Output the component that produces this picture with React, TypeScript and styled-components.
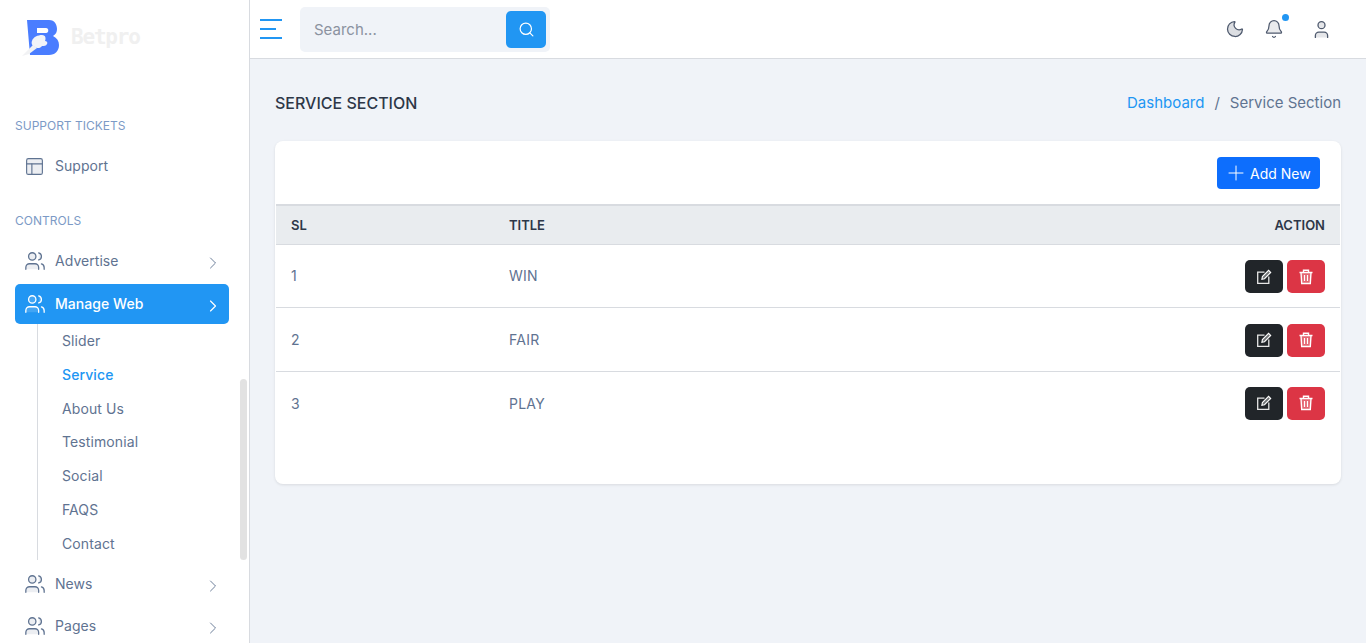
import React from "react";
import styled, { createGlobalStyle } from "styled-components";
import { ChevronRight, Search, Moon, Bell, User, Users, Layout, Plus } from "lucide-react";

const Global = createGlobalStyle`
  html, body { margin: 0; padding: 0; height: 100%; overflow: hidden; }
  body { font-family: Inter, "Liberation Sans", sans-serif; background: #f0f3f8; }
  * { box-sizing: border-box; }
`;

const Page = styled.div`display: flex; width: 1366px; height: 643px; overflow: hidden;`;

const Sidebar = styled.aside`
  position: relative; width: 250px; height: 643px; flex: none; background: #fff;
  border-right: 1px solid #d8dbe0; overflow: hidden;
`;
const Brand = styled.div`display: flex; align-items: flex-start; height: 58px; padding: 18px 0 0 22px; gap: 9px; margin-bottom: 58px;`;
const BrandName = styled.span`font: 700 21px/1 "DejaVu Sans Mono", monospace; color: #f0f0f0; letter-spacing: -1.2px; margin-top: 9px;`;
const SectionLabel = styled.div<{ $top: number }>`
  font-size: 12px; line-height: 20px; height: 20px; margin: ${p => p.$top}px 0 0 15px; color: #7c9ac6;
`;
const NavRow = styled.div<{ $active?: boolean; $mt?: number }>`
  display: flex; align-items: center; width: 214px; height: 40px; margin: ${p => p.$mt ?? 0}px 0 0 15px; padding: 0 6px 0 9px;
  border-radius: 5px; font-size: 14px; font-weight: ${p => (p.$active ? 500 : 400)};
  background: ${p => (p.$active ? "#2196f3" : "transparent")};
  color: ${p => (p.$active ? "#fff" : "#5f7391")};
  svg { flex: none; }
`;
const NavText = styled.span`margin-left: 9px; flex: 1; padding-bottom: 2px; letter-spacing: 0.05px;`;
const Chevron = styled(ChevronRight)`margin-top: 4px;`;
const SupportIcon = styled(Layout)`margin-left: 0;`;
const SupportText = styled(NavText)`margin-left: 10px;`;
const SubList = styled.div`margin: 0 0 0 37px; height: 236px; border-left: 1px solid #d8dbe0; display: flex; flex-direction: column;`;
const SubItem = styled.div<{ $active?: boolean }>`
  height: 33.8px; line-height: 33.8px; padding-left: 24px; font-size: 14px; flex: none; letter-spacing: 0.1px;
  font-weight: ${p => (p.$active ? 500 : 400)};
  color: ${p => (p.$active ? "#2196f3" : "#5f7391")};
`;
const ScrollThumb = styled.div`position: absolute; left: 240px; top: 379px; width: 7px; height: 181px; background: #e2e2e2; border-radius: 4px;`;

const Content = styled.div`flex: 1; min-width: 0; display: flex; flex-direction: column;`;
const Topbar = styled.header`
  height: 59px; flex: none; background: #fff; border-bottom: 1px solid #d8dbe0;
  display: flex; align-items: center; padding: 0 0 0 10px;
`;
const Burger = styled.div`display: flex; flex-direction: column; gap: 7px; width: 22px; margin-top: -1px;`;
const BurgerLine = styled.span<{ $w: number }>`display: block; height: 2px; width: ${p => p.$w}px; background: #2196f3;`;
const SearchBox = styled.div`
  display: flex; align-items: center; width: 250px; height: 45px; margin: 1px 0 0 18px; background: #f0f3f8; border-radius: 5px;
  padding: 0 4px 0 14px;
`;
const SearchText = styled.span`flex: 1; font-size: 15px; color: #8b92a0;`;
const SearchBtn = styled.div`
  width: 40px; height: 37px; background: #2196f3; border-radius: 5px; display: flex; align-items: center; justify-content: center; color: #fff;
`;
const TopIcons = styled.div`margin-left: auto; display: flex; align-items: center; height: 100%; padding-right: 34px;`;
const TopIcon = styled.div<{ $ml: number }>`position: relative; margin-left: ${p => p.$ml}px; color: #4f5a6e; display: flex;`;
const Dot = styled.span`position: absolute; top: -5px; right: -5px; width: 7px; height: 7px; border-radius: 50%; background: #2196f3;`;

const Main = styled.main`flex: 1; padding: 0 25px;`;
const Crumbs = styled.div`display: flex; align-items: center; justify-content: space-between; height: 82px; padding-top: 6px;`;
const Title = styled.h1`margin: 0; font-size: 16px; font-weight: 500; color: #2d3748;`;
const Trail = styled.div`display: flex; gap: 10px; font-size: 15px; color: #5f7391; margin-top: -2px;`;
const TrailLink = styled.span`color: #2196f3;`;

const Card = styled.section`
  background: #fff; border-radius: 8px; height: 343px; box-shadow: 0 1px 3px rgba(0,0,0,.1); overflow: hidden; padding: 0 1px;
`;
const CardHead = styled.div`display: flex; justify-content: flex-end; align-items: center; height: 64px; padding: 0 20px 0 0; margin-bottom: -1px;`;
const AddBtn = styled.div`
  display: flex; align-items: center; width: 103px; height: 32px; border-radius: 4px; background: #0d6efd; color: #fff; font-size: 14px; padding-left: 7px; gap: 2px;
`;
const Table = styled.table`width: 100%; border-collapse: collapse; table-layout: fixed;`;
const Th = styled.th<{ $right?: boolean; $w?: number }>`
  height: 39px; background: #e9ecef; border-top: 2px solid #d8dbe0; border-bottom: 1px solid #d8dbe0; font-size: 13px; font-weight: 600; color: #2d3748;
  padding: 0 15px; text-align: ${p => (p.$right ? "right" : "left")}; ${p => (p.$w ? `width: ${p.$w}px;` : "")}
`;
const Actions = styled.div`display: flex; justify-content: flex-end; gap: 4px; padding-top: 2px;`;
const Td = styled.td<{ $right?: boolean }>`
  height: 63.5px; border-bottom: 1px solid #d8dbe0; font-size: 14px; letter-spacing: 0.25px; color: #5f7391; padding: 0 15px; text-align: ${p => (p.$right ? "right" : "left")};
`;
const ActionBtn = styled.div<{ $bg: string }>`
  width: 38px; height: 33px; border-radius: 5px; background: ${p => p.$bg}; color: #fff; display: flex; align-items: center; justify-content: center;
`;
const LastRowTd = styled(Td)`border-bottom: none; ${Actions} { padding-top: 0; }`;

const Logo = () => (
  <svg width="40" height="40" viewBox="0 0 40 40">
    <path d="M5 2H27C33 2 35 7 35 11C35 14 34 16 31 18C35 20 37 23 37 27C37 33 33 37 27 37H8Z" fill="#4a7dff" />
    <path d="M15 10h9c3 0 3 5 0 5h-9z" fill="#fff" />
    <path d="M10 23c1-4 6-6 10-6 4 0 4 4 3 6 2 0 3 2 2 3-1 2-3 2-5 2-1 2-5 3-7 1-3-1-4-4-3-6z" fill="#f2f4f8" />
    <path d="M0 38L11 27l4 3-8 6z" fill="#f1f2f4" />
  </svg>
);

const EditIcon = () => (
  <svg width="16" height="16" viewBox="0 0 16 16" fill="none" stroke="#e6e6e6" strokeWidth="1.3">
    <path d="M8.5 3.2H1.7V14.3H12.8V7.5" />
    <path d="M5.9 10.2L6.4 7.6L12.6 1.4L14.7 3.5L8.5 9.7Z" fill="rgba(255,255,255,.35)" stroke="#fff" strokeWidth="1.1" />
  </svg>
);

const TrashIcon = () => (
  <svg width="16" height="16" viewBox="0 0 16 16" fill="none" stroke="currentColor" strokeWidth="1.4">
    <path d="M1.5 3.5H14.5" />
    <path d="M5.5 3.5V1.3H10.5V3.5" />
    <path d="M3 3.5L3.7 14.5H12.3L13 3.5" fill="rgba(255,255,255,.25)" />
    <path d="M6.5 6V12M9.5 6V12" strokeWidth="1.2" />
  </svg>
);

const iconFill = "rgba(95,115,145,.12)";

const NavIcon = ({ active }: { active?: boolean }) => (
  <Users size={22} strokeWidth={1.4} fill={active ? "rgba(255,255,255,.15)" : iconFill} />
);

const Row = ({ sl, title, last }: { sl: number; title: string; last?: boolean }) => {
  const Cell = last ? LastRowTd : Td;
  return (
    <tr>
      <Cell>{sl}</Cell>
      <Cell>{title}</Cell>
      <Cell $right>
        <Actions>
          <ActionBtn $bg="#212529"><EditIcon /></ActionBtn>
          <ActionBtn $bg="#dc3545"><TrashIcon /></ActionBtn>
        </Actions>
      </Cell>
    </tr>
  );
};

const subs = ["Slider", "Service", "About Us", "Testimonial", "Social", "FAQS", "Contact"];

export default function App() {
  return (
    <Page>
      <Global />
      <Sidebar>
        <Brand><Logo /><BrandName>Betpro</BrandName></Brand>
        <SectionLabel $top={0}>SUPPORT TICKETS</SectionLabel>
        <NavRow $mt={10}>
          <SupportIcon size={21} strokeWidth={1.3} fill={iconFill} />
          <SupportText>Support</SupportText>
        </NavRow>
        <SectionLabel $top={25}>CONTROLS</SectionLabel>
        <NavRow $mt={10}>
          <NavIcon /><NavText>Advertise</NavText><Chevron size={20} strokeWidth={1.1} />
        </NavRow>
        <NavRow $active $mt={3}>
          <NavIcon active /><NavText>Manage Web</NavText><Chevron size={20} strokeWidth={1.4} />
        </NavRow>
        <SubList>
          {subs.map(s => <SubItem key={s} $active={s === "Service"}>{s}</SubItem>)}
        </SubList>
        <NavRow $mt={4}>
          <NavIcon /><NavText>News</NavText><Chevron size={20} strokeWidth={1.1} />
        </NavRow>
        <NavRow $mt={2}>
          <NavIcon /><NavText>Pages</NavText><Chevron size={20} strokeWidth={1.1} />
        </NavRow>
        <ScrollThumb />
      </Sidebar>
      <Content>
        <Topbar>
          <Burger>
            <BurgerLine $w={22} /><BurgerLine $w={16} /><BurgerLine $w={22} />
          </Burger>
          <SearchBox>
            <SearchText>Search...</SearchText>
            <SearchBtn><Search size={17} strokeWidth={1.7} /></SearchBtn>
          </SearchBox>
          <TopIcons>
            <TopIcon $ml={0}><Moon size={20} strokeWidth={1.5} fill="rgba(79,90,110,.2)" /></TopIcon>
            <TopIcon $ml={19}><Bell size={20} strokeWidth={1.5} fill="rgba(79,90,110,.12)" /><Dot /></TopIcon>
            <TopIcon $ml={27}><User size={21} strokeWidth={1.5} fill="rgba(79,90,110,.15)" /></TopIcon>
          </TopIcons>
        </Topbar>
        <Main>
          <Crumbs>
            <Title>SERVICE SECTION</Title>
            <Trail><TrailLink>Dashboard</TrailLink><span>/</span><span>Service Section</span></Trail>
          </Crumbs>
          <Card>
            <CardHead>
              <AddBtn><Plus size={24} strokeWidth={1} />Add New</AddBtn>
            </CardHead>
            <Table>
              <thead>
                <tr>
                  <Th $w={218}>SL</Th>
                  <Th>TITLE</Th>
                  <Th $right>ACTION</Th>
                </tr>
              </thead>
              <tbody>
                <Row sl={1} title="WIN" />
                <Row sl={2} title="FAIR" />
                <Row sl={3} title="PLAY" last />
              </tbody>
            </Table>
          </Card>
        </Main>
      </Content>
    </Page>
  );
}
